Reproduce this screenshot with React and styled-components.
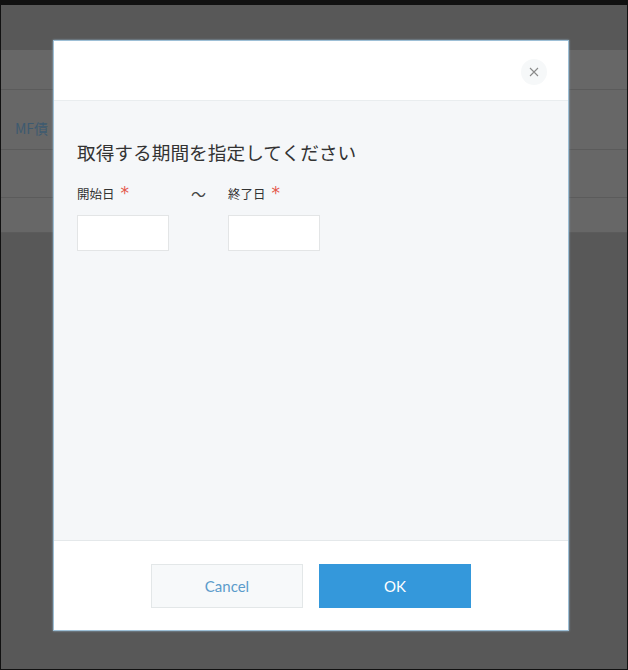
import React from 'react';
import styled, { createGlobalStyle } from 'styled-components';

const GlobalStyle = createGlobalStyle`
  html, body {
    margin: 0;
    padding: 0;
    background: #111;
  }
  * {
    box-sizing: border-box;
  }
`;

const Frame = styled.div`
  position: relative;
  width: 628px;
  height: 670px;
  border-style: solid;
  border-color: #111;
  border-width: 5px 1px 1px 1px;
  background: #585858;
  display: flex;
  flex-direction: column;
  font-family: "Noto Sans CJK JP", "Noto Sans", sans-serif;
  overflow: hidden;
`;

const TopBand = styled.div`
  height: 45px;
  background: #585858;
`;

const Table = styled.div`
  background: #676767;
  display: flex;
  flex-direction: column;
`;

const Row = styled.div`
  height: ${props => props.h}px;
  border-bottom: 1px solid #5b5b5b;
  display: flex;
  align-items: center;
  padding-left: 14px;
`;

const RowText = styled.span`
  font-size: 14px;
  color: #3d5a70;
  padding-top: 16px;
`;

const Rest = styled.div`
  flex: 1;
  background: #585858;
`;

const Modal = styled.div`
  position: absolute;
  top: 35px;
  left: 52px;
  width: 516px;
  height: 591px;
  background: #fff;
  border: 1px solid #9dbfd6;
  box-shadow: 0 0 2px rgba(160, 200, 225, 0.8);
  display: flex;
  flex-direction: column;
`;

const Header = styled.div`
  height: 60px;
  border-bottom: 1px solid #e9edef;
  display: flex;
  justify-content: flex-end;
  align-items: center;
  padding-right: 21px;
`;

const CloseButton = styled.button`
  width: 26px;
  height: 26px;
  border-radius: 50%;
  border: none;
  background: #f6f8f9;
  display: flex;
  align-items: center;
  justify-content: center;
  padding: 0;
  margin-top: 2px;
  cursor: pointer;
`;

const Body = styled.div`
  flex: 1;
  background: #f5f7f9;
  padding: 40px 23px 0;
`;

const Title = styled.h2`
  margin: 0 0 20px;
  font-size: 18.7px;
  font-weight: 400;
  line-height: 22px;
  color: #333;
`;

const Fields = styled.div`
  display: flex;
  align-items: flex-start;
`;

const Field = styled.div`
  display: flex;
  flex-direction: column;
  width: 92px;
`;

const Label = styled.label`
  display: flex;
  align-items: center;
  height: 20px;
  font-size: 12.5px;
  font-weight: 400;
  color: #333;
  white-space: nowrap;
  margin-bottom: 12px;
`;

const Required = styled.span`
  color: #e4564a;
  font-size: 17px;
  margin-left: 6px;
  font-family: "DejaVu Sans", sans-serif;
`;

const Separator = styled.div`
  width: 59px;
  height: 20px;
  display: flex;
  align-items: center;
  justify-content: center;
  font-size: 15px;
  color: #444;
`;

const Input = styled.input`
  width: 92px;
  height: 36px;
  border: 1px solid #e3e5e6;
  background: #fff;
  outline: none;
`;

const Footer = styled.div`
  height: 90px;
  border-top: 1px solid #e4e8ea;
  display: flex;
  justify-content: center;
  gap: 16px;
  padding-top: 23px;
`;

const Button = styled.button`
  width: 152px;
  height: 44px;
  font-family: Lato, "Noto Sans", sans-serif;
  font-size: 15px;
  cursor: pointer;
  border: 1px solid ${props => (props.primary ? '#3498db' : '#e3e7e8')};
  background: ${props => (props.primary ? '#3498db' : '#f7f9fa')};
  color: ${props => (props.primary ? '#fff' : '#5b9ccb')};
`;

export default function App() {
  return (
    <>
      <GlobalStyle />
      <Frame>
        <TopBand />
        <Table>
          <Row h={40} />
          <Row h={60}>
            <RowText>MF債</RowText>
          </Row>
          <Row h={48} />
          <Row h={35} />
        </Table>
        <Rest />

        <Modal>
          <Header>
            <CloseButton aria-label="close">
              <svg width="10" height="10" viewBox="0 0 10 10">
                <path d="M1 1L9 9M9 1L1 9" stroke="#8a8a8a" strokeWidth="1.1" />
              </svg>
            </CloseButton>
          </Header>
          <Body>
            <Title>取得する期間を指定してください</Title>
            <Fields>
              <Field>
                <Label>
                  開始日<Required>*</Required>
                </Label>
                <Input />
              </Field>
              <Separator>〜</Separator>
              <Field>
                <Label>
                  終了日<Required>*</Required>
                </Label>
                <Input />
              </Field>
            </Fields>
          </Body>
          <Footer>
            <Button>Cancel</Button>
            <Button primary>OK</Button>
          </Footer>
        </Modal>
      </Frame>
    </>
  );
}
